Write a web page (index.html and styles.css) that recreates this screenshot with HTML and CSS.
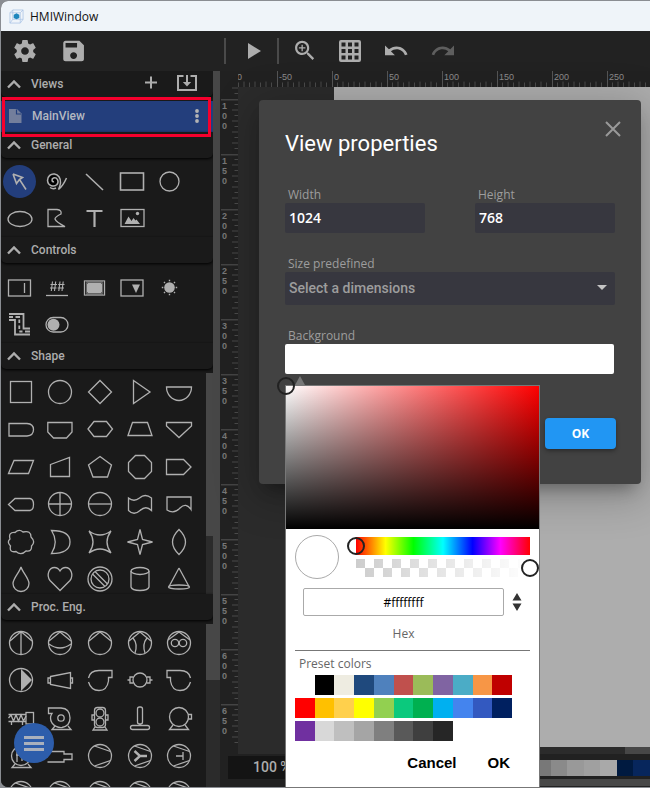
FILE: index.html
```html
<!DOCTYPE html>
<html lang="en">
<head>
<meta charset="utf-8">
<title>HMIWindow</title>
<link rel="stylesheet" href="styles.css">
</head>
<body>
<svg class="defs" aria-hidden="true">
  <symbol id="chev" viewBox="0 0 16 16"><path d="M2 11.5L8 5.5L14 11.5" fill="none" stroke="currentColor" stroke-width="2.4"/></symbol>
  <symbol id="hticks" viewBox="0 0 55 16"><path d="M.5 0V16" stroke="#555"/><path d="M5.500 11.500V16M11 10.500V16M16.500 11.500V16M22 10.500V16M27.500 11.500V16M33 10.500V16M38.500 11.500V16M44 10.500V16M49.500 11.500V16" stroke="#4a4a4a"/></symbol>
  <symbol id="vticks" viewBox="0 0 18 55"><path d="M1 .5H18" stroke="#444" stroke-width="2"/><path d="M14.500 5.500H18M12 11H18M14.500 16.500H18M12 22H18M14.500 27.500H18M12 33H18M14.500 38.500H18M12 44H18M14.500 49.500H18" stroke="#4a4a4a"/></symbol>
  <symbol id="turbo" viewBox="0 0 28 28"><circle cx="14" cy="14" r="11.500"/><path d="M8.500 4L24.500 9.500M8.500 24L24.500 18.500"/></symbol>
</svg>
<div class="window">
  <header class="titlebar">
    <svg class="logo" viewBox="0 0 16 16" fill="none"><path d="M1 4L4 1H15V11L12 15H1ZM1 4H12V15M12 4L15 1M4 1V11H15M4 11L1 15" stroke="#a9c3e6" stroke-width=".8"/><path d="M8 4.500L11 6V9.500L8 11L5 9.500V6Z" fill="#1f86bd"/></svg>
    <span>HMIWindow</span>
  </header>
  <nav class="toolbar">
    <div class="tools tools-file">
      <button aria-label="Settings"><svg viewBox="0 0 24 24"><path d="M19.430 12.980c.04-.32.07-.64.07-.98s-.03-.66-.07-.98l2.110-1.650c.19-.15.24-.42.12-.64l-2-3.460c-.12-.22-.39-.3-.61-.22l-2.490 1c-.52-.4-1.080-.73-1.690-.98l-.38-2.650C14.460 2.180 14.250 2 14 2h-4c-.25 0-.46.18-.49.42l-.38 2.650c-.61.25-1.170.59-1.690.98l-2.490-1c-.23-.09-.49 0-.61.22l-2 3.460c-.13.22-.07.49.12.64l2.110 1.650c-.04.32-.07.65-.07.98s.03.66.07.98l-2.110 1.650c-.19.15-.24.42-.12.64l2 3.460c.12.22.39.3.61.22l2.490-1c.52.4 1.080.73 1.690.98l.38 2.650c.03.24.24.42.49.42h4c.25 0 .46-.18.49-.42l.38-2.650c.61-.25 1.170-.59 1.690-.98l2.490 1c.23.09.49 0 .61-.22l2-3.460c.12-.22.07-.49-.12-.64l-2.110-1.650zM12 15.500c-1.930 0-3.500-1.570-3.500-3.500s1.570-3.500 3.500-3.500 3.500 1.570 3.500 3.500-1.570 3.500-3.500 3.500z" transform="translate(-1.200 -1.200) scale(1.100)"/></svg></button>
      <button aria-label="Save"><svg viewBox="0 0 24 24"><path d="M17 3H5c-1.110 0-2 .9-2 2v14c0 1.100.89 2 2 2h14c1.100 0 2-.9 2-2V7l-4-4zm-5 16c-1.660 0-3-1.340-3-3s1.340-3 3-3 3 1.340 3 3-1.340 3-3 3zm3-10H5V5h10v4z" transform="translate(-1.200 -1.800) scale(1.150)"/></svg></button>
    </div>
    <span class="sep"></span>
    <button class="play" aria-label="Run"><svg viewBox="0 0 24 24"><path d="M7 4v16l13-8z"/></svg></button>
    <span class="sep"></span>
    <div class="tools tools-view">
      <button aria-label="Zoom in"><svg viewBox="0 0 24 24"><path d="M15.500 14h-.79l-.28-.27C15.410 12.590 16 11.110 16 9.500 16 5.910 13.090 3 9.500 3S3 5.910 3 9.500 5.910 16 9.500 16c1.610 0 3.090-.59 4.230-1.570l.27.28v.79l5 4.990L20.490 19l-4.990-5zm-6 0C7.010 14 5 11.990 5 9.500S7.010 5 9.500 5 14 7.010 14 9.500 11.990 14 9.500 14zM12.500 10.100h-2.400v2.400H8.900v-2.400H6.500V8.900h2.400V6.500h1.200v2.400h2.400z" transform="translate(-.200 -1.400) scale(1.090)"/></svg></button>
      <button aria-label="Grid"><svg viewBox="0 0 24 24"><path fill-rule="evenodd" d="M3 1H21Q23 1 23 3V21Q23 23 21 23H3Q1 23 1 21V3Q1 1 3 1ZM3.500 3.500V7.500H7.500V3.500ZM10 3.500V7.500H14V3.500ZM16.500 3.500V7.500H20.500V3.500ZM3.500 10V14H7.500V10ZM10 10V14H14V10ZM16.500 10V14H20.500V10ZM3.500 16.500V20.500H7.500V16.500ZM10 16.500V20.500H14V16.500ZM16.500 16.500V20.500H20.500V16.500Z"/></svg></button>
      <button aria-label="Undo"><svg viewBox="0 0 24 24"><path d="M12.500 8c-2.650 0-5.050.99-6.900 2.600L2 7v9h9l-3.620-3.620c1.390-1.160 3.160-1.880 5.120-1.880 3.540 0 6.550 2.310 7.600 5.500l2.370-.78C21.080 11.030 17.150 8 12.500 8z" transform="translate(-1.200 -1.300) scale(1.100)"/></svg></button>
      <button class="off" aria-label="Redo"><svg viewBox="0 0 24 24"><path d="M18.400 10.600C16.550 8.990 14.150 8 11.500 8c-4.650 0-8.580 3.030-9.960 7.220L3.900 16c1.050-3.190 4.050-5.500 7.600-5.500 1.950 0 3.730.72 5.120 1.880L13 16h9V7l-3.600 3.600z" transform="translate(0 -1.300) scale(1.100)"/></svg></button>
    </div>
  </nav>
  <div class="main">
    <aside class="sidebar">
      <section class="views">
        <h2 class="head"><svg><use href="#chev"/></svg>Views
          <span class="head-actions">
            <button aria-label="Add view"><svg viewBox="0 0 20 20"><path d="M10 2.500V14.500M4 8.500H16"/></svg></button>
            <button aria-label="Import view"><svg viewBox="0 0 20 20"><path d="M6.500 2H1V16H19V2H13.500M10 1V11"/><path d="M5.800 8H14.200L10 12.500Z" class="solid"/></svg></button>
          </span>
        </h2>
        <div class="view-row">
          <svg class="doc" viewBox="0 0 14 16"><path d="M1 1H9L13.500 5.500V15H1Z"/><path d="M8.500 1.500V6H13" fill="none" stroke="#233e7c" stroke-width="1.200"/></svg>
          <a href="#mainview">MainView</a>
          <button aria-label="View menu"><svg viewBox="0 0 6 18"><circle cx="3" cy="4" r="1.900"/><circle cx="3" cy="9" r="1.900"/><circle cx="3" cy="14" r="1.900"/></svg></button>
        </div>
        <div class="marker"></div>
      </section>
      <section>
        <h2 class="head"><svg><use href="#chev"/></svg>General</h2>
        <div class="grid general">
          <button class="on" aria-label="Select"><svg viewBox="0 0 28 28"><path d="M7 6L16.500 9.500L13.500 11.500L20 21.500M13.500 11.500L10.500 15.500L7 6" stroke-width="1.600"/></svg></button>
          <button aria-label="Pencil"><svg viewBox="0 0 28 28"><circle cx="10.500" cy="12.500" r="5" fill="#000" stroke="none"/><path d="M11 13.500C9 14.500 8 11 10.500 10C14 9 16.500 13 14 16.500C11 19.500 5 18 4.500 12.500C4.500 8 8 5.500 11.500 6C15 6.500 18 10 17.500 15Q17 18.500 15.500 21.500Q20 18 23.500 10M7 19.500Q10 21.500 13 20" stroke-width="1.500"/></svg></button>
          <button aria-label="Line"><svg viewBox="0 0 28 28"><path d="M5 6L22 22" stroke-width="1.600"/></svg></button>
          <button aria-label="Rectangle"><svg viewBox="0 0 28 28"><rect x="1.500" y="5" width="23" height="17" stroke-width="1.600"/></svg></button>
          <button aria-label="Circle"><svg viewBox="0 0 28 28"><circle cx="13.500" cy="13.500" r="9.500"/></svg></button>
          <button aria-label="Ellipse"><svg viewBox="0 0 28 28"><ellipse cx="14" cy="14" rx="12" ry="7.500"/></svg></button>
          <button aria-label="Path"><svg viewBox="0 0 28 28"><path d="M5 4.500H14Q19 5 18 9Q12 12 12 14Q13 17 22 21.500H5Z"/></svg></button>
          <button aria-label="Text"><svg viewBox="0 0 28 28"><path d="M5.500 6H21.500M13.500 6V22" stroke-width="2.200"/></svg></button>
          <button aria-label="Image"><svg viewBox="0 0 28 28"><rect x="2" y="4.500" width="23" height="17" /><path d="M5.500 19L9.500 11.500L12.500 16L14.500 13L16.500 15.500L17.500 14.500L21 19Z" class="solid"/><circle cx="18.500" cy="8.500" r="1.700" class="solid"/></svg></button>
        </div>
      </section>
      <section>
        <h2 class="head"><svg><use href="#chev"/></svg>Controls</h2>
        <div class="grid general controls">
          <button aria-label="Input"><svg viewBox="0 0 28 28"><rect x="2.500" y="6" width="22" height="16"/><path d="M18.500 9V19"/></svg></button>
          <button aria-label="Output"><svg viewBox="0 0 28 28"><path d="M3 21.500H25"/><path d="M9.500 7.500L8.300 17M12.700 7.500L11.500 17M7.500 10.500H14M7 14H13.500M17 7.500L15.800 17M20.200 7.500L19 17M15.200 10.500H21.500M14.700 14H21" stroke-width="1.100"/></svg></button>
          <button aria-label="Button"><svg viewBox="0 0 28 28"><rect x="3.500" y="7" width="20" height="14"/><rect x="5.500" y="8.500" width="16" height="11" class="solid"/><path d="M4 7L7 10M23 7L20 10M4 21L7 18M23 21L20 18" stroke="#555" stroke-width=".8"/></svg></button>
          <button aria-label="Select box"><svg viewBox="0 0 28 28"><rect x="2" y="6" width="22" height="16"/><path d="M13 10.500H21L17 19Z" class="solid"/></svg></button>
          <button aria-label="Light"><svg viewBox="0 0 28 28"><circle cx="13.500" cy="13.500" r="5.300" class="solid"/><path d="M13.500 5.800V7.300M13.500 19.700V21.200M5.800 13.500H7.300M19.700 13.500H21.200M8 8L9 9M18 18L19 19M19 8L18 9M9 18L8 19" stroke-width="1.400"/></svg></button>
          <button aria-label="Pipe"><svg viewBox="0 0 28 28"><path d="M3 3H17.500V17.500H24M3 9H9V23.500H24" stroke-width="1.800"/><path d="M3 6H7M9.500 6H14M13.300 8.500V12M13.300 14.500V18M13.300 20.500H16.500M19 20.500H24" stroke-width="1.800"/></svg></button>
          <button aria-label="Switch"><svg viewBox="0 0 28 28"><rect x="3" y="6.500" width="22" height="14.500" rx="7.200"/><circle cx="10.500" cy="13.700" r="6" class="solid"/></svg></button>
        </div>
      </section>
      <section>
        <h2 class="head"><svg><use href="#chev"/></svg>Shape</h2>
        <div class="scroll shape-scroll">
          <div class="grid shapes">
            <button aria-label="Square"><svg viewBox="0 0 28 28"><rect x="3.500" y="3.500" width="21" height="21"/></svg></button>
            <button aria-label="Disc"><svg viewBox="0 0 28 28"><circle cx="14" cy="14" r="11.500"/></svg></button>
            <button aria-label="Diamond"><svg viewBox="0 0 28 28"><path d="M14 2.500L25.500 14L14 25.500L2.500 14Z"/></svg></button>
            <button aria-label="Triangle"><svg viewBox="0 0 28 28"><path d="M7.500 2.500L24 14L7.500 25.500Z"/></svg></button>
            <button aria-label="Half disc"><svg viewBox="0 0 28 28"><path d="M1.500 9H26.500A12.500 13.500 0 0 1 1.500 9Z"/></svg></button>
            <button aria-label="Delay"><svg viewBox="0 0 28 28"><path d="M2 8.500H20Q26.500 9 26.500 14.500Q26.500 20.500 20 21H2Z"/></svg></button>
            <button aria-label="Loop limit"><svg viewBox="0 0 28 28"><path d="M1.800 7.500H26V17L20.500 23H7.500L1.800 17Z"/></svg></button>
            <button aria-label="Hexagon"><svg viewBox="0 0 28 28"><path d="M2 14L8 6.500H20.500L26.500 14L20.500 21.500H8Z"/></svg></button>
            <button aria-label="Trapezoid"><svg viewBox="0 0 28 28"><path d="M2 20.500L6.500 7.500H21.500L26 20.500Z"/></svg></button>
            <button aria-label="Merge"><svg viewBox="0 0 28 28"><path d="M1.500 7.500H26.500V11L14 22.500L1.500 11Z"/></svg></button>
            <button aria-label="Parallelogram"><svg viewBox="0 0 28 28"><path d="M1.500 20.500L7 7.500H26.500L21.500 20.500Z"/></svg></button>
            <button aria-label="Manual input"><svg viewBox="0 0 28 28"><path d="M4.500 11.500L23.500 4.500V23.500H4.500Z"/></svg></button>
            <button aria-label="Pentagon"><svg viewBox="0 0 28 28"><path d="M14 3.500L25.500 12L21.500 24H7L2.500 12Z"/></svg></button>
            <button aria-label="Octagon"><svg viewBox="0 0 28 28"><path d="M9.500 2.500H18.500L25.500 9.500V18.500L18.500 25.500H9.500L2.500 18.500V9.500Z"/></svg></button>
            <button aria-label="Tag"><svg viewBox="0 0 28 28"><path d="M1.500 6.500H18.500L26 14L18.500 21.500H1.500Z"/></svg></button>
            <button aria-label="Display"><svg viewBox="0 0 28 28"><path d="M1.500 14.500L8 8.500H23Q26.500 9 26.500 14.500T23 20.500H8Z"/></svg></button>
            <button aria-label="Or"><svg viewBox="0 0 28 28"><circle cx="14" cy="14" r="11.500"/><path d="M14 2.500V25.500M2.500 14H25.500"/></svg></button>
            <button aria-label="Split disc"><svg viewBox="0 0 28 28"><circle cx="14" cy="14" r="11.500"/><path d="M2.500 14H25.500"/></svg></button>
            <button aria-label="Tape"><svg viewBox="0 0 28 28"><path d="M2.500 8Q8 12.500 13.500 8Q19 3 25.500 8V20.500Q20 15 14 20.500Q8 26 2.500 20.500Z"/></svg></button>
            <button aria-label="Document"><svg viewBox="0 0 28 28"><path d="M2 7H26V19.500Q21 12 15 18Q9 24.500 2 20Z"/></svg></button>
            <button aria-label="Cloud"><svg viewBox="0 0 28 28"><path d="M8 4.500Q12 .5 16 4Q24 2 24 9Q29 14 24.500 18Q25 24 19 23Q14 28 9 23.500Q2 25 3.500 18Q-.5 14 3 11Q1 4 8 4.500Z"/></svg></button>
            <button aria-label="Moon"><svg viewBox="0 0 28 28"><path d="M5.500 2.500Q24 2.500 24 14T5.500 25.500Q13 14 5.500 2.500Z"/></svg></button>
            <button aria-label="Curved star"><svg viewBox="0 0 28 28"><path d="M3 3Q14 11 25 3Q17 14 25 25Q14 17 3 25Q11 14 3 3Z"/></svg></button>
            <button aria-label="Star"><svg viewBox="0 0 28 28"><path d="M14 1.500L16.500 11.500L26.500 14L16.500 16.500L14 26.500L11.500 16.500L1.500 14L11.500 11.500Z"/></svg></button>
            <button aria-label="Lens"><svg viewBox="0 0 28 28"><path d="M14 1.500Q27 14 14 26.500Q1 14 14 1.500Z"/></svg></button>
            <button aria-label="Drop"><svg viewBox="0 0 28 28"><path d="M14 2C15 6.500 22 13.500 22 18.500A8 8 0 0 1 6 18.500C6 13.500 13 6.500 14 2Z"/></svg></button>
            <button aria-label="Heart"><svg viewBox="0 0 28 28"><path d="M14 25.500L4 15.500C0 10 3 2.500 8.500 2.500C12 2.500 14 6 14 6S16 2.500 19.500 2.500C25 2.500 28 10 24 15.500Z"/></svg></button>
            <button aria-label="Forbidden"><svg viewBox="0 0 28 28"><circle cx="14" cy="14" r="12"/><circle cx="14" cy="14" r="9"/><path d="M9 6.500L21.500 19M6.500 9L19 21.500"/></svg></button>
            <button aria-label="Cylinder"><svg viewBox="0 0 28 28"><ellipse cx="14" cy="6" rx="9" ry="3.500"/><path d="M5 6V22Q6 25.500 14 25.500T23 22V6"/></svg></button>
            <button aria-label="Cone"><svg viewBox="0 0 28 28"><path d="M14 3L4 21.500M14 3L24 21.500"/><ellipse cx="14" cy="22" rx="10.500" ry="2"/></svg></button>
          </div>
          <div class="track"><div class="thumb"></div></div>
        </div>
      </section>
      <section class="proc">
        <h2 class="head"><svg><use href="#chev"/></svg>Proc. Eng.</h2>
        <div class="scroll proc-scroll">
          <div class="grid procs">
            <button aria-label="Pump 1"><svg viewBox="0 0 28 28"><circle cx="14" cy="14" r="11.500"/><path d="M3 12L14 2.500L25 12M14 2.500V25.500"/></svg></button>
            <button aria-label="Pump 2"><svg viewBox="0 0 28 28"><circle cx="14" cy="14" r="11.500"/><path d="M3 12L14 3L25 12M3 15Q14 23 25 15"/></svg></button>
            <button aria-label="Pump 3"><svg viewBox="0 0 28 28"><circle cx="14" cy="14" r="11.500"/><path d="M3 12L14 3L25 12"/></svg></button>
            <button aria-label="Pump 4"><svg viewBox="0 0 28 28"><circle cx="14" cy="14" r="11.500"/><path d="M3 12L14 3L25 12M7 9Q12 15 9 24M21 9Q16 15 19 24"/></svg></button>
            <button aria-label="Pump 5"><svg viewBox="0 0 28 28"><circle cx="14" cy="14" r="11.500"/><path d="M3 11L14 3L25 11"/><circle cx="10" cy="14" r="3.700"/><circle cx="18" cy="14" r="3.700"/></svg></button>
            <button aria-label="Pump 6"><svg viewBox="0 0 28 28"><circle cx="14" cy="14" r="11.500"/><path d="M14 3V25L25 14Z" class="solid"/></svg></button>
            <button aria-label="Cone blower"><svg viewBox="0 0 28 28"><path d="M4.500 10.500L24.500 6.500V22.500L4.500 18.500ZM4.500 12H2V17H4.500M24.500 12H26.500V17H24.500"/></svg></button>
            <button aria-label="Fan right"><svg viewBox="0 0 28 28"><path d="M2.500 12Q4 4.500 13 4.500H26V11.500H22.500V15Q21 24.500 13 24.500T2.500 16"/></svg></button>
            <button aria-label="Inline pump"><svg viewBox="0 0 28 28"><circle cx="14" cy="14" r="7"/><path d="M7 11H4V17H7M21 11H24V17H21M1.500 14H4M24 14H26.500" /></svg></button>
            <button aria-label="Fan left"><svg viewBox="0 0 28 28"><path d="M25.500 12Q24 4.500 15 4.500H2V11.500H5.500V15Q7 24.500 15 24.500T25.500 16"/></svg></button>
            <button aria-label="Screw pump"><svg viewBox="0 0 28 28"><path d="M1.500 10.500H19M1.500 17.500H19M1.500 14L4 11L6.500 17L9 11L11.500 17L14 11L16.500 17L19 12M4.500 18V21M15.500 18V21"/><rect x="19" y="8.500" width="7.500" height="11.500"/></svg></button>
            <button aria-label="Blower"><svg viewBox="0 0 28 28"><path d="M15 4H2.500V9.500H6Q3 14 6 19Q10 24 16 23.500Q24 22 24 14Q24 4.500 15 4Z"/><circle cx="15" cy="14" r="3.200"/><path d="M9 22L6 25.500H25L22 22"/></svg></button>
            <button aria-label="Rotary pump"><svg viewBox="0 0 28 28"><rect x="8.500" y="3.500" width="11" height="20" rx="3"/><circle cx="14" cy="9" r="4"/><circle cx="14" cy="18" r="4"/><path d="M8 11H6V16H8M20 11H22V16H20M9 23L7 26H21L19 23"/></svg></button>
            <button aria-label="Vertical pump"><svg viewBox="0 0 28 28"><rect x="11.500" y="3" width="5" height="17" rx="2"/><rect x="4.500" y="21.500" width="19" height="4" rx="2"/><path d="M14 20V22"/></svg></button>
            <button aria-label="Motor pump"><svg viewBox="0 0 28 28"><circle cx="14" cy="13" r="9.500"/><path d="M23 10.500H26.500V15H23M8 21L4.500 25.500H23.500L20 21"/></svg></button>
            <button aria-label="Compressor"><svg viewBox="0 0 28 28"><circle cx="14" cy="14" r="9.500"/><path d="M9 13H15V19M8 22L5 25.500H24L21 22M10 8V20"/></svg></button>
            <button aria-label="Nozzle"><svg viewBox="0 0 28 28"><path d="M1.500 9.500H18V12H26V17.500H18V20H1.500"/></svg></button>
            <button aria-label="Turbo 1"><svg><use href="#turbo"/></svg></button>
            <button aria-label="Turbo 2"><svg viewBox="0 0 28 28"><use href="#turbo"/><path d="M8.500 9L14 14L8.500 19M14 14H21" stroke-width="2.400"/></svg></button>
            <button aria-label="Turbo 3"><svg viewBox="0 0 28 28"><use href="#turbo"/><path d="M18 10V18M11 14H18"/></svg></button>
            <button aria-label="Turbo 4"><svg viewBox="0 0 28 28"><use href="#turbo"/><path d="M10 11L14 15L18 11"/></svg></button>
            <button aria-label="Turbo 5"><svg viewBox="0 0 28 28"><use href="#turbo"/><path d="M8 12H19"/></svg></button>
            <button aria-label="Turbo 6"><svg><use href="#turbo"/></svg></button>
            <button aria-label="Turbo 7"><svg><use href="#turbo"/></svg></button>
            <button aria-label="Turbo 8"><svg><use href="#turbo"/></svg></button>
          </div>
          <div class="track"><div class="thumb"></div></div>
        </div>
      </section>
      <button class="fab" aria-label="Menu"><i></i><i></i><i></i></button>
    </aside>
    <div class="track side-track"><div class="thumb"></div></div>
    <main class="workspace">
      <div class="hruler"><div class="hcells">
        <span><svg><use href="#hticks"/></svg>-100</span><span><svg><use href="#hticks"/></svg>-50</span><span><svg><use href="#hticks"/></svg>0</span><span><svg><use href="#hticks"/></svg>50</span><span><svg><use href="#hticks"/></svg>100</span><span><svg><use href="#hticks"/></svg>150</span><span><svg><use href="#hticks"/></svg>200</span><span><svg><use href="#hticks"/></svg>250</span>
      </div></div>
      <div class="vruler"><div class="vcells">
        <span><svg><use href="#vticks"/></svg></span><span><svg><use href="#vticks"/></svg>1<br>0<br>0</span><span><svg><use href="#vticks"/></svg>1<br>5<br>0</span><span><svg><use href="#vticks"/></svg>2<br>0<br>0</span><span><svg><use href="#vticks"/></svg>2<br>5<br>0</span><span><svg><use href="#vticks"/></svg>3<br>0<br>0</span><span><svg><use href="#vticks"/></svg>3<br>5<br>0</span><span><svg><use href="#vticks"/></svg>4<br>0<br>0</span><span><svg><use href="#vticks"/></svg>4<br>5<br>0</span><span><svg><use href="#vticks"/></svg>5<br>0<br>0</span><span><svg><use href="#vticks"/></svg>5<br>5<br>0</span><span><svg><use href="#vticks"/></svg>6<br>0<br>0</span><span><svg><use href="#vticks"/></svg>6<br>5<br>0</span>
      </div></div>
      <div class="canvas"><div class="sheet"></div></div>
      <div class="hscroll"><div></div></div>
      <footer class="status">
        <div class="zoom">100 %</div>
        <div class="palette">
          <div class="cells"><i class="p1"></i><i class="p2"></i><i class="p3"></i><i class="p4"></i><i class="p5"></i><i class="p6"></i><i class="p7"></i></div>
          <div class="bar"></div>
        </div>
      </footer>
    </main>
  </div>
</div>

<form class="dialog" role="dialog" aria-labelledby="dlg-title">
  <button type="button" class="close" aria-label="Close"><svg viewBox="0 0 16 16"><path d="M1 1L15 15M15 1L1 15"/></svg></button>
  <h1 id="dlg-title">View properties</h1>
  <div class="pair">
    <div class="field"><label for="w">Width</label><input id="w" type="text" value="1024"></div>
    <div class="field"><label for="h">Height</label><input id="h" type="text" value="768"></div>
  </div>
  <div class="field"><label for="size">Size predefined</label>
    <div class="select"><select id="size"><option>Select a dimensions</option></select></div></div>
  <div class="field"><label for="bg">Background</label><button type="button" id="bg" class="bg"></button></div>
  <div class="actions"><button type="submit" class="ok">OK</button></div>
</form>

<div class="picker" role="dialog" aria-label="Color picker">
  <div class="tip"></div>
  <div class="sat"><div class="sat-handle"></div></div>
  <div class="tones">
    <div class="current"></div>
    <div class="sliders">
      <div class="hue"><input type="range" aria-label="Hue" min="0" max="360" value="0"></div>
      <div class="alpha"><input type="range" aria-label="Alpha" min="0" max="100" value="100"></div>
    </div>
  </div>
  <div class="hex">
    <input id="hex" type="text" value="#ffffffff">
    <button type="button" aria-label="Change format"><svg viewBox="0 0 10 20"><path d="M5 1L9.500 8.500H.5ZM5 19L9.500 11.500H.5Z"/></svg></button>
    <label for="hex">Hex</label>
  </div>
  <hr>
  <p>Preset colors</p>
  <div class="presets">
    <i class="c1"></i><i class="c2"></i><i class="c3"></i><i class="c4"></i><i class="c5"></i><i class="c6"></i><i class="c7"></i><i class="c8"></i><i class="c9"></i><i class="c10"></i><i class="c11"></i>
    <i class="c12"></i><i class="c13"></i><i class="c14"></i><i class="c15"></i><i class="c16"></i><i class="c17"></i><i class="c18"></i><i class="c19"></i><i class="c20"></i><i class="c21"></i><i class="c22"></i>
    <i class="c23"></i><i class="c24"></i><i class="c25"></i><i class="c26"></i><i class="c27"></i><i class="c28"></i><i class="c29"></i><i class="c30"></i>
  </div>
  <div class="picker-actions"><button type="button">Cancel</button><button type="button">OK</button></div>
</div>
</body>
</html>
```
FILE: styles.css
```css
* { box-sizing: border-box; }
body { margin: 0; height: 100vh; overflow: hidden; position: relative; background: #8a8d92; font-family: Roboto, sans-serif; }
button { border: 0; padding: 0; background: none; color: inherit; font: inherit; display: flex; align-items: center; justify-content: center; }
svg { display: block; }
.defs { position: absolute; width: 0; height: 0; }

.window { height: calc(100vh - 2px); margin: 1px 0 1px 1px; border-radius: 7px 0 0 7px; overflow: hidden; display: flex; flex-direction: column; background: #212121; }
.titlebar { height: 30px; flex: none; display: flex; align-items: center; gap: 6px; padding-left: 8px; background: #eff4f9; color: #111; font: 12px "Open Sans", sans-serif; }
.logo { width: 15px; height: 15px; }
.toolbar { height: 40px; flex: none; display: flex; align-items: center; background: #222; color: #adadad; padding-left: 12px; }
.toolbar svg { width: 24px; height: 24px; fill: currentColor; }
.tools { display: flex; }
.tools-file { gap: 24px; width: 211px; }
.tools-view { gap: 22px; padding-left: 13px; }
.sep { width: 2px; height: 26px; background: #4a4a4a; }
.play { margin: 0 12px 0 15px; }
.off { color: #5e5e5e; }
.main { flex: 1; min-height: 0; display: flex; }

.sidebar { width: 212px; flex: none; background: #1a1a1a; color: #adadad; position: relative; display: flex; flex-direction: column; overflow: hidden; }
.head { margin: 0; height: 26px; display: flex; align-items: center; gap: 9px; padding-left: 5px; font-size: 12px; font-weight: 500; background: #1a1a1a; border-radius: 0 0 5px 5px; box-shadow: 0 1px 3px #000; position: relative; z-index: 1; }
.head > svg { width: 16px; height: 16px; }
.head-actions { margin-left: auto; display: flex; gap: 16px; padding-right: 16px; }
.head-actions svg { width: 20px; height: 20px; fill: none; stroke: currentColor; stroke-width: 2; }
.head-actions .solid { fill: currentColor; stroke: none; }
.views { position: relative; }
.view-row { margin-top: 4px; height: 31px; display: flex; align-items: center; background: #233e7c; padding: 0 13px 2px 7px; font-size: 12px; font-weight: 500; }
.view-row a { color: #b4b8c0; text-decoration: none; flex: 1; margin-left: 10px; }
.doc { width: 14px; height: 16px; fill: #737e9c; }
.view-row button svg { width: 6px; height: 18px; fill: #b4b4b4; }
.marker { position: absolute; z-index: 2; left: 1px; right: 2px; top: 26px; height: 40px; border: 3px solid #f5002d; pointer-events: none; }
.grid { display: grid; grid-template-columns: repeat(5, 1fr); }
.grid svg { width: 28px; height: 28px; flex: none; fill: none; stroke: #b0b0b0; stroke-width: 1.3; }
.grid .solid { fill: #b0b0b0; stroke: none; }
.general { grid-auto-rows: 37px; padding: 5px 24px 0 0; }
.controls { padding-top: 6px; }
.on { background: #233e7c; border-radius: 50%; width: 33px; height: 33px; place-self: center; }
.scroll { display: flex; overflow: hidden; }
.scroll .grid { flex: 1; padding: 4px 7px 0 0; }
.shape-scroll { height: 225px; }
.shapes { grid-template-rows: repeat(6, 1fr); height: 229px; }
.procs { grid-template-rows: repeat(5, 1fr); height: 192px; }
.proc { flex: 1; display: flex; flex-direction: column; min-height: 0; }
.proc .head { flex: none; }
.proc-scroll { flex: 1; }
.track { width: 7px; flex: none; background: #2b2b2b; }
.scroll .track { margin-top: 4px; }
.thumb { background: #474747; }
.shape-scroll .thumb { height: 163px; }
.proc-scroll .thumb { height: 56px; }
.side-track .thumb { height: 609px; }
.fab { position: absolute; z-index: 3; left: 13px; bottom: 24px; width: 40px; height: 40px; border-radius: 50%; background: #2d5dab; flex-direction: column; gap: 3px; }
.fab i { width: 20px; height: 3px; background: #a9b0bd; }

.workspace { flex: 1; min-width: 0; display: grid; grid-template-columns: 18px minmax(0, 1fr); grid-template-rows: 16px minmax(0, 1fr) 7px 33px; background: #212121; font: 9px "Liberation Sans", sans-serif; color: #8c8c8c; }
.hruler { grid-column: 2; overflow: hidden; }
.hcells { display: flex; margin-left: -16px; }
.hcells span { width: 55px; height: 16px; flex: none; position: relative; padding-left: 2px; line-height: 12px; }
.hcells svg, .vcells svg { position: absolute; left: 0; top: 0; }
.hcells svg { width: 55px; height: 16px; }
.vruler { grid-column: 1; grid-row: 2; overflow: hidden; }
.vcells { margin-top: -43px; font-weight: 700; color: #777; }
.vcells span { display: block; height: 55px; position: relative; padding: 2px 0 0 2px; line-height: 10px; }
.vcells svg { width: 18px; height: 55px; }
.canvas { grid-column: 2; grid-row: 2; background: #2b2b2b; padding-left: 96px; display: flex; min-height: 0; }
.sheet { flex: 1; background: #adadad; }
.hscroll { grid-column: 2; background: #2b2b2b; display: flex; justify-content: flex-end; }
.hscroll div { width: 25px; background: #474747; }
.status { grid-column: 1 / 3; display: flex; justify-content: space-between; }
.zoom { margin: 2px 0 8px 8px; width: 120px; padding-left: 25px; background: #141414; color: #adadad; font: 500 14px/23px Roboto, sans-serif; }
.palette { width: 116px; padding-top: 6px; }
.cells { display: grid; grid-template-columns: repeat(7, 1fr); height: 16px; }
.bar { margin-top: 3px; height: 7px; background: #474747; }
.p1 { background: #787878; } .p2 { background: #8a8a8a; } .p3 { background: #999; } .p4 { background: #a0a0a0; } .p5 { background: #a9a9a9; } .p6 { background: #001a40; } .p7 { background: #07265c; }

.dialog { position: absolute; left: 259px; top: 100px; width: 382px; padding: 28px 26px 35px; background: #424242; border-radius: 4px; box-shadow: 0 11px 15px -7px rgba(0,0,0,.3), 0 9px 40px 6px rgba(0,0,0,.22); color: #9d9d9d; }
.dialog h1 { margin: 0 0 27px; font-size: 22px; line-height: 32px; font-weight: 400; color: #fff; }
.close { position: absolute; right: 20px; top: 21px; }
.close svg { width: 16px; height: 16px; fill: none; stroke: #999; stroke-width: 2; }
.pair { display: flex; gap: 50px; }
.pair .field { flex: 1; min-width: 0; }
.field { margin-bottom: 23px; }
.field label { display: block; padding-left: 3px; font: 500 12px/16px "Open Sans", sans-serif; }
.field input { display: block; width: 100%; height: 30px; border: 0; border-radius: 2px; padding: 0 4px 2px; background: #37373f; color: #fff; font: 600 14px "Open Sans", sans-serif; }
.select { position: relative; }
.select::after { content: ""; position: absolute; right: 8px; top: 13px; border: 5px solid transparent; border-top-color: #c4c4c4; border-bottom: 0; }
.select select { display: block; appearance: none; width: 100%; height: 33px; border: 0; border-radius: 2px; padding: 0 4px 2px; background: #37373f; color: #9d9d9d; font: 500 14px Roboto, sans-serif; }
.bg { width: calc(100% - 1px); height: 30px; background: #fff; border-radius: 2px; }
.actions { display: flex; justify-content: flex-end; margin: 44px -1px 0 0; }
.ok { width: 71px; height: 31px; border-radius: 4px; background: #2196f3; color: #fff; font: 700 12px "Open Sans", sans-serif; box-shadow: 0 2px 4px rgba(0,0,0,.35); }

.picker { position: absolute; left: 285px; top: 385px; width: 255px; background: #fff; border: 1px solid #777; color: #666; font: 12px "Open Sans", sans-serif; }
.tip { position: absolute; left: 9px; top: -10px; border: 5px solid transparent; border-bottom: 9px solid #777; border-top: 0; }
.sat { height: 143px; position: relative; background: linear-gradient(to top, #000, transparent), linear-gradient(to right, #fff, #f00); }
.sat-handle { position: absolute; left: -9px; top: -9px; width: 18px; height: 18px; border: 2px solid #222; border-radius: 50%; }
.tones { display: flex; gap: 17px; padding: 6px 9px 0; }
.current { width: 44px; height: 44px; border: 1px solid #aaa; border-radius: 50%; }
.sliders { flex: 1; padding-top: 2px; }
.hue, .alpha { height: 18px; }
.hue { background: linear-gradient(to right, #f00, #ff0 17%, #0f0 33%, #0ff 50%, #00f 67%, #f0f 83%, #f00); }
.alpha { margin-top: 4px; background: linear-gradient(to right, transparent, #fff), conic-gradient(#fff 25%, #cdcdcd 0 50%, #fff 0 75%, #cdcdcd 0) 0 0 / 18px 18px; }
.sliders input { appearance: none; display: block; width: calc(100% + 18px); height: 18px; margin: 0 -9px; background: none; }
.sliders input::-webkit-slider-thumb { appearance: none; width: 18px; height: 18px; border: 2px solid #222; border-radius: 50%; background: none; }
.hex { display: grid; grid-template-columns: 201px 10px; column-gap: 8px; padding: 9px 17px 0; }
.hex input { height: 28px; border: 1px solid #aaa; border-radius: 2px; padding: 0; text-align: center; color: #000; background: #fff; font: 12px "Open Sans", sans-serif; }
.hex svg { width: 10px; height: 20px; fill: #333; }
.hex label { text-align: center; line-height: 16px; margin-top: 10px; }
.picker hr { margin: 8px 9px 5px; border: 0; height: 1px; background: #777; }
.picker p { margin: 0 13px 4px; line-height: 15px; }
.presets { display: grid; grid-template-columns: repeat(11, 1fr); grid-auto-rows: 20px; row-gap: 3px; width: 217px; margin-left: 9px; }
.picker-actions { display: flex; justify-content: flex-end; gap: 31px; padding: 11px 29px 13px; color: #000; font: 700 15px/22px "Liberation Sans", sans-serif; }
.c1 { background: #fff; } .c2 { background: #000; } .c3 { background: #eeece1; } .c4 { background: #1f497d; } .c5 { background: #4f81bd; } .c6 { background: #c0504d; } .c7 { background: #9bbb59; } .c8 { background: #8064a2; } .c9 { background: #4bacc6; } .c10 { background: #f79646; } .c11 { background: #c00000; }
.c12 { background: #f00; } .c13 { background: #ffc000; } .c14 { background: #ffd04c; } .c15 { background: #ff0; } .c16 { background: #92d050; } .c17 { background: #0bc97d; } .c18 { background: #00b050; } .c19 { background: #00b0f0; } .c20 { background: #4484ee; } .c21 { background: #3359c0; } .c22 { background: #002060; }
.c23 { background: #7030a0; } .c24 { background: #d8d8d8; } .c25 { background: #bfbfbf; } .c26 { background: #a5a5a5; } .c27 { background: #7f7f7f; } .c28 { background: #595959; } .c29 { background: #3f3f3f; } .c30 { background: #262626; }
```
